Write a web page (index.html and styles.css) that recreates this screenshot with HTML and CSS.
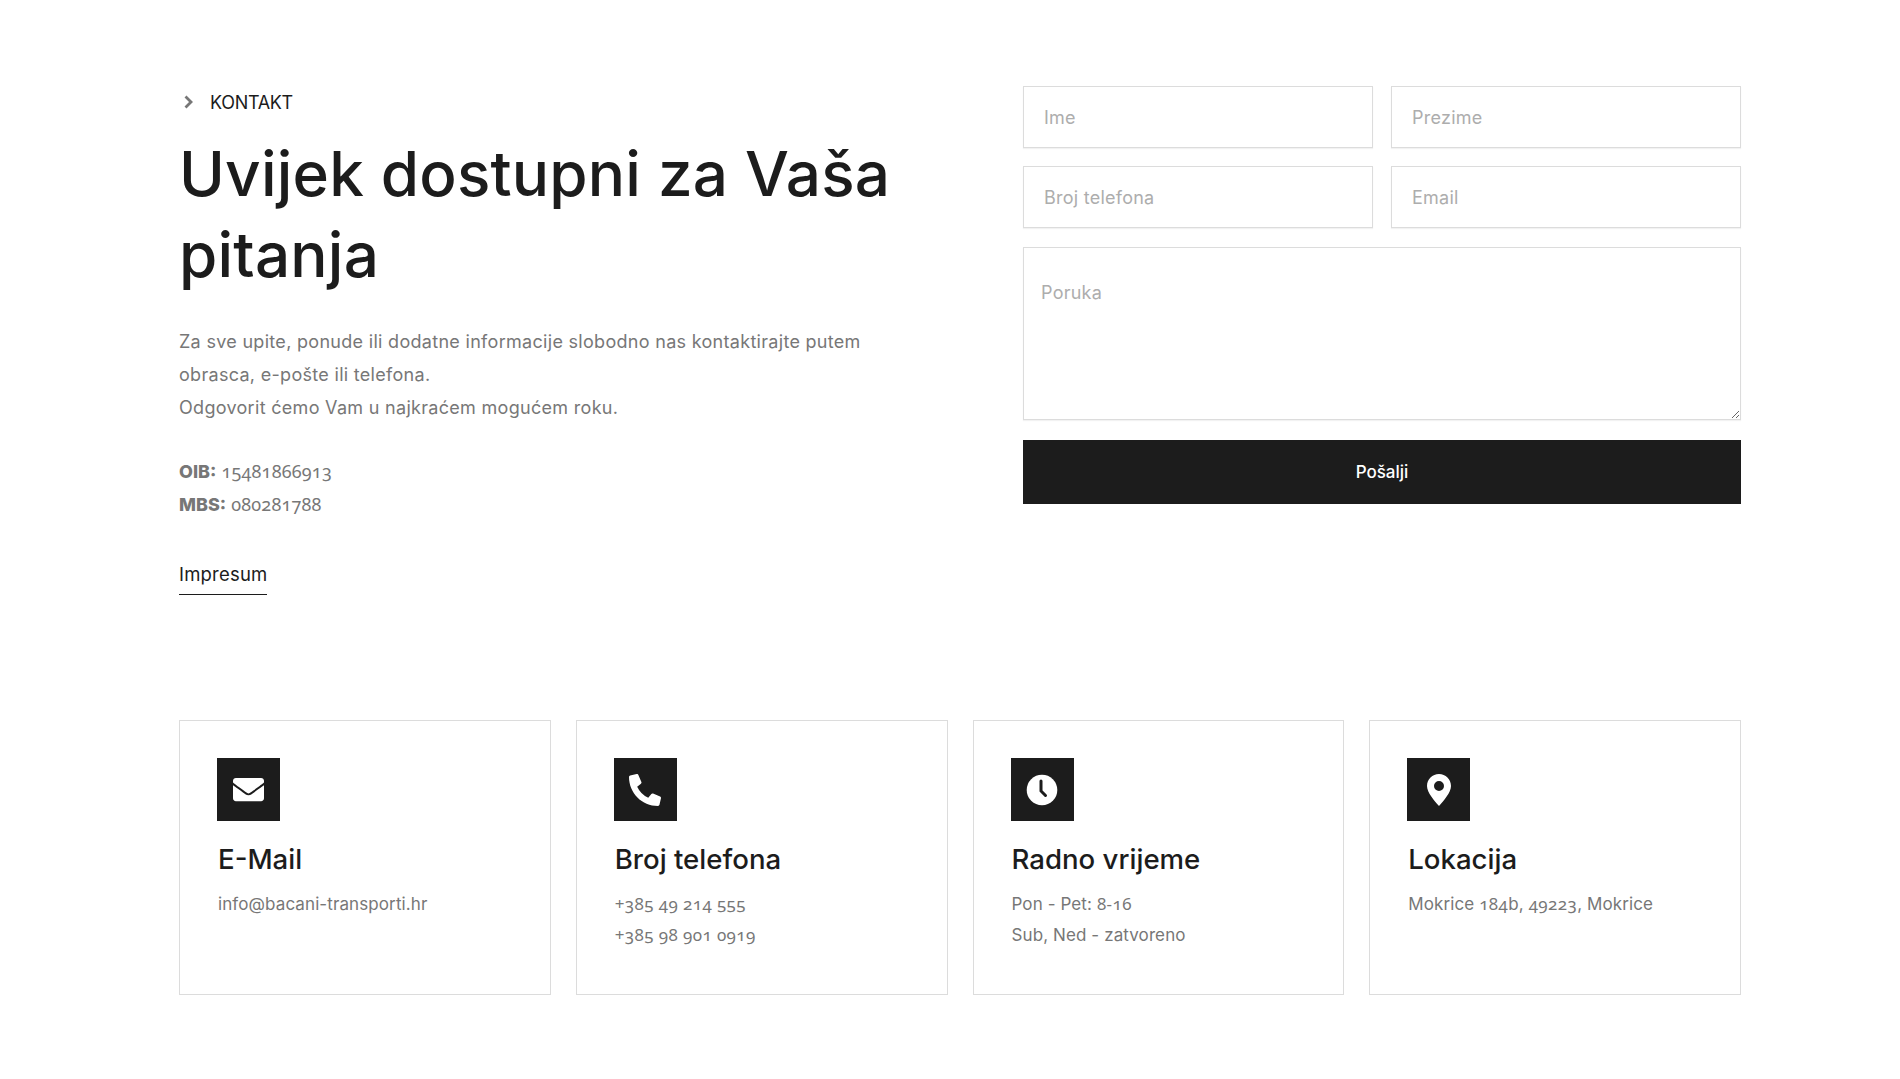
FILE: index.html
```html
<!DOCTYPE html>
<html>
  <head>
    <meta charset="utf-8">
    <title>Kontakt</title>
    <link rel="stylesheet" href="styles.css">
  </head>
  <body>
    <main class="page">
      <section class="contact">
        <div class="intro">
          <div class="eyebrow">
            <svg class="chevron" viewBox="0 0 10 14"><path d="M2.500 1.500 8 7l-5.500 5.500" fill="none" stroke="#777" stroke-width="2.800"/></svg>
            <span>KONTAKT</span>
          </div>
          <h1>Uvijek dostupni za Vaša pitanja</h1>
          <p class="lead">
            Za sve upite, ponude ili dodatne informacije slobodno nas kontaktirajte putem
            obrasca, e-pošte ili telefona.<br>
            Odgovorit ćemo Vam u najkraćem mogućem roku.
          </p>
          <p class="ids">
            <b>OIB:</b> <span class="digits">15481866913</span><br>
            <b>MBS:</b> <span class="digits">080281788</span>
          </p>
          <a class="impresum" href="#">Impresum</a>
        </div>
        <form class="form">
          <input type="text" placeholder="Ime">
          <input type="text" placeholder="Prezime">
          <input type="text" placeholder="Broj telefona">
          <input type="text" placeholder="Email">
          <textarea placeholder="Poruka"></textarea>
          <button type="button">Pošalji</button>
        </form>
      </section>

      <section class="cards">
        <article class="card">
          <div class="icon">
            <svg width="31" height="31" viewBox="0 0 512 512"><path fill="#fff" d="M502.3 190.8c3.9-3.1 9.7-.2 9.7 4.7V400c0 26.5-21.5 48-48 48H48c-26.5 0-48-21.5-48-48V195.6c0-5 5.7-7.8 9.7-4.7 22.4 17.4 52.1 39.5 154.1 113.6 21.1 15.4 56.7 47.8 92.2 47.6 35.7.3 72-32.8 92.3-47.6 102-74.1 131.6-96.3 154-113.7zM256 320c23.2.4 56.6-29.2 73.4-41.4 132.7-96.3 142.8-104.7 173.4-128.7 5.8-4.5 9.2-11.5 9.2-18.9v-19c0-26.5-21.5-48-48-48H48C21.5 64 0 85.5 0 112v19c0 7.4 3.4 14.3 9.2 18.9 30.6 23.9 40.7 32.4 173.4 128.700 16.8 12.2 50.2 41.800 73.4 41.400z"/></svg>
          </div>
          <h3>E-Mail</h3>
          <p>info@bacani-transporti.hr</p>
        </article>
        <article class="card">
          <div class="icon">
            <svg width="32" height="32" viewBox="0 0 512 512"><path fill="#fff" d="M497.39 361.8l-112-48a24 24 0 0 0-28 6.9l-49.6 60.6A370.66 370.66 0 0 1 130.6 204.11l60.6-49.6a23.94 23.94 0 0 0 6.9-28l-48-112A24.16 24.16 0 0 0 122.6.61l-104 24A24 24 0 0 0 0 48c0 256.5 207.9 464 464 464a24 24 0 0 0 23.4-18.6l24-104a24.29 24.29 0 0 0-14.01-27.6z"/></svg>
          </div>
          <h3>Broj telefona</h3>
          <p><span class="digits">+385 49 214 555</span><br><span class="digits">+385 98 901 0919</span></p>
        </article>
        <article class="card">
          <div class="icon">
            <svg width="32" height="32" viewBox="0 0 32 32"><circle cx="16" cy="16" r="15.3" fill="#fff"/><path d="M15 7v10l4.5 4.5" fill="none" stroke="#1c1c1c" stroke-width="3" stroke-linecap="round"/></svg>
          </div>
          <h3>Radno vrijeme</h3>
          <p>Pon - Pet: <span class="digits">8-16</span><br>Sub, Ned - zatvoreno</p>
        </article>
        <article class="card">
          <div class="icon">
            <svg width="24" height="32" viewBox="0 0 24 32"><path fill="#fff" fill-rule="evenodd" d="M12 0C5.4 0 0 5.3 0 11.9c0 6.6 7.6 14.900 12 20.100 4.400-5.200 12-13.500 12-20.100C24 5.300 18.600 0 12 0zm0 7a5 5 0 1 1 0 10 5 5 0 0 1 0-10z"/></svg>
          </div>
          <h3>Lokacija</h3>
          <p>Mokrice <span class="digits">184</span>b, <span class="digits">49223</span>, Mokrice</p>
        </article>
      </section>
    </main>
  </body>
</html>
```

FILE: styles.css
```css
body {
  margin: 0;
  background: #fff;
  color: #1c1c1c;
  font-family: Inter, "Liberation Sans", sans-serif;
}

.page {
  width: 1562px;
  padding: 86px 159px 83px 179px;
}

.contact {
  display: grid;
  grid-template-columns: 1fr 718px;
  column-gap: 124px;
  height: 634px;
}

.eyebrow {
  display: flex;
  align-items: center;
  gap: 17px;
  height: 32px;
  font-size: 18px;
  letter-spacing: -0.3px;
  padding-left: 4px;
}

.chevron {
  width: 10px;
  height: 14px;
}

h1 {
  margin: 15px 0 0;
  font-size: 62px;
  line-height: 81px;
  letter-spacing: 0.2px;
  font-weight: 500;
}

.lead,
.ids {
  margin: 30px 0 0;
  color: #777;
  font-size: 18px;
  line-height: 33px;
}

.lead {
  letter-spacing: 0.3px;
}

.ids {
  margin-top: 31px;
}

.ids b {
  font-weight: 800;
}

.digits {
  font-family: "Noto Sans", sans-serif;
  font-variant-numeric: oldstyle-nums;
  line-height: 1;
}

.ids .digits {
  letter-spacing: 0.2px;
}

.impresum {
  display: inline-block;
  margin-top: 37px;
  padding-bottom: 3px;
  border-bottom: 1px solid #1c1c1c;
  color: #1c1c1c;
  font-size: 18.5px;
  letter-spacing: 0.2px;
  line-height: 33px;
  text-decoration: none;
}

.form {
  display: grid;
  grid-template-columns: 1fr 1fr;
  gap: 18px;
  align-content: start;
}

.form input,
.form textarea {
  box-sizing: border-box;
  width: 100%;
  border: 1px solid #dcdcdc;
  border-radius: 0;
  background: #fff;
  box-shadow: 0 1px 1px rgba(0, 0, 0, 0.05);
  color: #1c1c1c;
  font-family: inherit;
  font-size: 18px;
  letter-spacing: 0.25px;
  outline: none;
}

.form input {
  height: 62px;
  padding: 0 20px;
}

.form textarea {
  grid-column: 1 / 3;
  height: 173px;
  margin-top: 1px;
  padding: 34px 17px;
}

.form ::placeholder {
  color: #adadad;
  opacity: 1;
}

.form button {
  grid-column: 1 / 3;
  height: 64px;
  margin-top: 2px;
  border: 0;
  background: #1c1c1c;
  color: #fff;
  font-family: inherit;
  font-size: 17px;
  font-weight: 500;
}

.cards {
  display: grid;
  grid-template-columns: repeat(4, 1fr);
  gap: 25px;
}

.card {
  box-sizing: border-box;
  height: 275px;
  padding: 37px;
  border: 1px solid #dcdcdc;
}

.icon {
  display: flex;
  align-items: center;
  justify-content: center;
  width: 63px;
  height: 63px;
  background: #1c1c1c;
}

.card h3 {
  margin: 20px 0 0 1px;
  font-size: 27.6px;
  line-height: 36px;
  font-weight: 500;
}

.card p {
  margin: 12px 0 0 1px;
  color: #777;
  font-size: 17px;
  letter-spacing: 0.1px;
  line-height: 31px;
}

.card .digits {
  letter-spacing: 0.4px;
}
```
